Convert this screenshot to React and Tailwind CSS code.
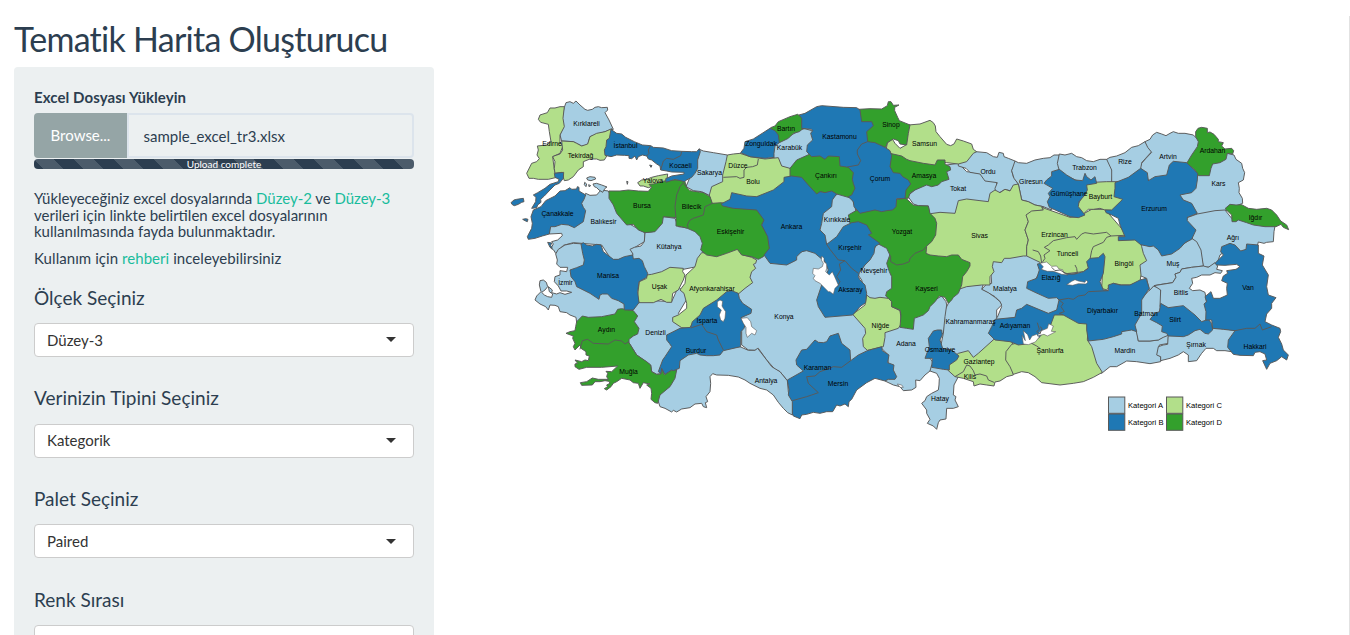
import React from "react";

const A = "#a6cee3";
const B = "#1f78b4";
const C = "#b2df8a";
const D = "#33a02c";
const W = "#ffffff";
const N = "none";

// Map sheets: every sheet has its own origin, three units to the pixel.
const SHEETS = {
  a: [505, 90], b: [505, 230], c: [650, 90], d: [660, 240], e: [800, 90],
  f: [820, 250], g: [960, 130], h: [960, 260], i: [1110, 120], j: [1100, 240],
};

// [sheet, fill, points]; the order is the paint order.
const SHAPES = [
  // category A
  ["a", A, "178,52 183,38 195,35 205,40 213,33 225,45 240,58 248,61 262,58 270,52 280,50 290,53 307,52 308,60 300,68 312,90 325,118 300,125 255,140 248,165 230,168 205,155 170,153 165,135 175,110 170,85"],
  ["a", A, "242,310 255,316 275,315 288,300 310,303 330,340 370,400 420,428 418,455 380,478 388,505 320,510 290,465 230,460 205,458 175,466 152,490 146,480 138,475 145,462 140,455 158,450 172,437 170,430 133,432 133,400 200,400"],
  ["b", A, "418,35 420,8 445,5 475,-40 510,-35 520,-10 590,0 600,60 575,110 500,125 428,140 415,120 405,98 380,85 384,72 375,58 388,52 408,48"],
  ["b", A, "152,72 160,58 180,45 205,40 240,42 250,90 300,130 380,200 370,260 250,280 215,278 213,262 195,255 185,248 165,245 160,230 150,226 135,225 130,240 122,230 105,222 90,210 95,198 108,185 103,165 105,152 115,150 124,157 128,170 120,180 110,187 118,195 128,200 140,202 143,192 133,185 130,170 142,180 140,188 155,192 165,188 180,193 200,187 185,183 168,183 160,168 148,155 150,140 165,135 165,122 185,125 188,112 165,112 155,102 157,90"],
  ["b", A, "370,235 405,210 500,215 520,170 550,200 520,250 560,300 500,325 510,350 475,430 455,433 440,425 437,405 395,375 372,338 365,328 380,300"],
  ["d", A, "245,315 245,275 240,220 215,150 270,120 265,50 310,40 380,60 445,25 490,40 530,110 520,190 580,215 625,265 625,350 572,375 480,345 420,410 382,422 360,395 345,388 320,360 295,325 285,331 265,330"],
  ["d", A, "45,385 50,355 110,330 180,325 240,320 265,331 285,331 293,325 320,360 335,380 360,395 382,422 385,455 400,485 397,525 383,518 370,505 355,487 340,465 320,450 300,445 270,430 255,420 235,411 205,406 170,405 158,401 150,410 152,430 150,455 138,470 143,485 136,488 140,503 130,500 125,490 105,492 90,503 65,507 50,516 40,511 35,516 15,505 0,500 -10,470 20,430"],
  ["c", A, "148,178 160,183 190,188 232,195 240,230 225,285 195,310 178,316 155,305 130,302 108,290 120,262 130,235 135,210"],
  ["c", A, "388,150 415,140 455,118 465,116 495,125 495,205 450,245 395,230 385,210 365,200 365,170"],
  ["e", A, "115,310 150,310 165,350 170,380 175,395 155,410 110,450 80,470 72,440 55,420 65,370 90,350 95,325"],
  ["e", A, "323,318 350,295 420,265 440,225 475,220 500,245 540,250 590,278 590,310 570,345 540,340 480,335 465,380 390,380 385,348 355,347 340,342"],
  ["g", A, "-5,95 20,70 48,65 80,68 100,80 112,82 117,67 130,70 132,80 145,85 165,93 168,97 155,122 160,140 175,162 150,182 135,178 120,187 108,190 105,175 112,158 75,153 60,132 30,127 18,115 -5,108"],
  ["g", A, "165,93 175,98 200,100 225,90 250,85 270,83 282,75 298,75 297,100 310,130 280,180 275,240 250,230 225,225 205,215 185,210 182,195 175,162 162,145 155,122"],
  ["g", A, "298,72 315,75 335,70 350,80 365,83 380,92 400,95 420,88 440,88 455,105 458,130 455,158 410,170 370,160 300,130 292,100"],
  ["i", A, "-10,118 0,112 20,108 45,98 65,82 85,77 105,65 125,95 95,128 95,155 55,185 15,195 5,190 5,150"],
  ["i", A, "105,65 120,58 128,45 140,37 155,42 168,47 180,40 190,35 205,40 225,40 250,45 275,70 245,135 185,140 175,175 120,190 105,160 92,145 95,130 108,115 125,97 113,82"],
  ["i", A, "290,160 308,122 340,115 352,100 372,105 378,118 395,130 398,145 404,158 400,180 385,188 388,205 387,218 397,235 398,250 360,265 345,275 262,285 235,255 200,225 250,200 255,160"],
  ["i", A, "225,295 262,282 315,272 345,270 365,295 430,305 495,318 492,335 490,365 470,367 462,370 445,366 440,385 400,405 365,380 330,405 318,440 280,442 276,418 270,395 258,380 248,358 240,330"],
  ["h", A, "90,-5 145,-10 200,-22 260,5 225,60 215,85 245,90 300,115 295,145 265,175 200,155 180,175 100,190 105,178 112,172 125,140 120,125 105,110 65,88 80,72 95,70"],
  ["f", A, "420,110 490,103 485,118 505,128 525,142 540,155 545,165 530,180 530,205 535,260 540,290 465,335 410,325 365,300 362,290 370,250 370,215 375,180 385,160 395,145"],
  ["f", A, "365,138 378,155 380,165 375,200 370,250 340,260 335,290 330,325 345,345 330,363 315,375 300,392 287,390 288,412 275,420 250,422 240,410 220,405 195,393 215,375 205,340 200,310 180,290 185,250 240,225 275,230 280,195 330,165 345,150"],
  ["f", A, "335,345 388,350 415,380 402,405 400,435 408,440 405,450 415,470 400,475 380,475 378,507 360,510 355,518 350,538 340,528 322,520 330,508 320,490 320,480 305,460 315,452 320,440 335,430 355,420 357,405 358,385 350,370 330,363"],
  ["f", A, "155,10 175,-25 200,-10 222,20 225,120 195,155 140,150 125,90 110,68 125,60 135,42"],
  ["j", A, "-45,295 25,280 65,260 108,255 115,303 150,303 175,300 207,280 205,292 205,310 178,315 173,345 182,350 182,365 150,371 110,365 80,363 50,380 30,380 5,400 -20,390"],
  ["j", A, "120,180 160,138 180,145 190,190 170,235 195,260 207,285 190,292 175,300 150,303 115,303 108,270 100,255 118,220"],
  ["j", A, "115,10 155,10 185,35 240,20 275,-5 290,5 303,30 310,78 275,82 245,87 240,97 225,102 228,112 218,128 190,132 162,137 148,152 140,115 115,105 110,85 130,62 120,45"],
  ["j", A, "162,137 218,128 228,112 225,102 240,97 245,87 275,82 310,78 325,82 345,68 353,78 350,88 367,92 362,100 345,98 330,105 305,105 290,112 275,115 278,130 268,145 278,152 300,150 315,157 320,190 322,245 300,250 250,210 180,200 182,150"],
  ["j", A, "205,280 250,280 300,260 345,264 375,267 410,272 395,310 395,335 375,332 350,332 340,325 318,325 305,340 290,362 265,365 265,345 250,335 235,345 210,355 182,362 182,350 170,345 175,320 190,315 203,313"],
  ["a", A, "245,264 255,260 270,262 272,267 258,272 248,270"],
  ["a", A, "264,282 275,280 290,285 306,291 300,295 293,307 282,300 275,293 268,290"],
  ["a", A, "239,277 245,282 243,290 238,284"],
  ["a", A, "251,284 257,287 252,290"],
  ["a", A, "365,274 369,275 367,283"],
  ["b", B, "128,37 140,39 137,46 142,55 135,52"],
  // category C
  ["a", C, "178,50 165,50 150,54 135,54 127,68 105,75 100,88 107,97 130,103 133,125 138,155 125,165 97,168 100,180 96,195 103,206 95,215 80,220 70,240 65,250 72,265 85,265 100,268 130,268 155,262 148,240 143,200 165,190 173,170 165,155 165,135 178,110 174,85"],
  ["a", C, "320,116 300,125 275,130 255,140 248,162 230,168 215,160 205,155 170,153 173,180 165,192 150,197 143,200 150,215 148,235 150,250 170,247 178,272 190,270 205,260 220,240 235,230 235,215 255,207 275,207 285,211 298,210 310,190 320,150"],
  ["a", C, "398,278 410,270 425,268 440,262 460,257 488,252 486,270 480,282 440,290 430,293 415,288 405,288"],
  ["b", C, "425,135 440,133 470,125 495,112 535,115 533,125 540,135 535,150 520,180 503,190 500,217 485,217 468,208 445,218 402,218 397,200 403,155 425,145"],
  ["d", C, "125,38 150,40 205,30 230,25 250,45 275,52 290,60 287,70 280,73 287,85 275,95 270,112 278,128 255,145 235,162 200,170 140,215 95,255 88,265 65,263 38,245 38,232 55,225 80,205 80,190 72,160 60,150 75,130 78,105 105,80 112,55"],
  ["c", C, "232,195 250,192 270,190 300,200 345,207 385,203 395,228 420,235 430,250 410,268 402,285 370,310 290,328 250,320 240,338 213,348 185,340 178,315 185,290 218,275 218,255 228,215"],
  ["c", N, "325,207 322,225 308,230 290,232 282,240 282,262 270,265 260,260 220,262"],
  ["e", C, "325,105 360,102 390,91 400,98 406,108 408,125 420,140 440,163 452,167 462,162 470,147 490,153 515,162 520,178 530,185 520,190 500,215 475,222 440,218 415,215 405,235 370,232 330,222 275,200 258,182 262,158 277,147 285,160 300,175 318,165"],
  ["g", C, "-95,252 -60,247 -15,250 -5,212 20,207 60,212 85,215 90,190 105,180 120,188 135,178 150,183 160,165 175,162 182,195 185,210 205,215 225,225 250,230 250,240 215,245 200,255 205,275 195,300 205,330 200,350 200,378 190,378 150,385 133,385 125,398 100,395 97,410 102,425 90,440 90,465 65,465 20,470 -10,480 -20,440 -100,400 -110,360 -80,310 -75,270"],
  ["g", C, "245,232 330,262 355,260 395,238 435,238 480,290 500,315 540,330 545,350 550,370 560,392 540,405 543,435 540,455 510,465 485,465 460,460 448,470 440,480 425,475 430,380 410,395 370,425 310,432 250,425 240,397 200,378 200,350 205,330 195,300 205,275 198,255 215,243 250,240"],
  ["g", N, "218,360 235,365 242,378 245,400 255,385 252,375 270,362 253,352 265,345 280,332 320,323 345,320 350,328 365,312 375,308 400,312 440,307 453,318 492,316"],
  ["g", N, "453,318 440,322 430,337 400,350 395,362 390,388"],
  ["g", C, "400,157 440,155 475,155 475,180 490,190 500,210 465,242 435,240 420,235 400,238 385,238 370,252 350,230 370,195 372,165"],
  ["f", C, "383,360 390,330 415,310 445,302 460,322 475,310 525,265 580,270 570,310 580,375 560,380 540,393 525,396 522,408 500,405 480,402 462,408 460,395 430,385 405,380"],
  ["f", N, "405,380 430,365 440,345 450,348 460,362 465,375 480,372 500,378 505,390 522,397"],
  ["f", C, "140,135 150,143 165,145 180,142 205,145 215,155 215,170 240,182 245,220 235,235 195,248 195,262 190,290 142,301 130,290 128,265 137,250 135,235 98,193 135,165"],
  ["h", C, "155,253 210,240 225,225 262,190 280,160 320,165 355,185 385,190 382,240 395,260 410,310 427,337 400,352 370,365 340,370 300,375 245,368 225,350 205,338 185,335 160,343 150,320 137,300 138,275"],
  // category D
  ["b", D, "215,275 232,258 250,262 290,260 330,252 338,238 350,236 385,242 398,258 388,275 402,295 398,312 385,318 372,328 372,338 395,375 425,395 437,405 440,425 455,433 468,432 470,415 478,434 500,420 515,420 510,445 495,470 465,495 458,520 450,518 438,508 440,490 438,475 425,465 435,462 415,458 405,475 400,460 385,458 375,450 350,445 335,455 325,460 318,470 305,480 298,476 308,470 305,465 315,460 312,454 300,452 285,455 270,455 262,465 230,466 226,458 245,455 262,444 280,448 310,448 305,440 308,430 303,424 320,425 338,408 315,410 290,412 245,412 222,418 210,410 210,402 218,400 210,390 230,395 240,390 250,392 253,378 243,375 243,365 228,355 225,345 210,360 205,350 210,340 203,325 205,318 183,310 195,305 210,302 212,290"],
  ["b", N, "225,358 232,332 248,328 265,340 310,342 330,330 350,333 360,342 372,335"],
  ["a", D, "312,303 345,303 370,300 400,303 430,304 440,292 432,283 445,282 490,270 538,270 545,290 547,340 540,385 475,380 472,400 450,425 420,428 400,420 385,403 365,405 335,370 325,345 312,325"],
  ["c", D, "100,278 108,290 120,302 160,308 180,320 187,340 215,338 250,348 320,355 340,375 343,390 335,405 350,430 355,440 360,475 340,500 325,508 305,500 275,495 262,478 230,490 200,500 170,495 152,480 157,460 150,440 135,425 112,415 95,410 78,408 78,385 75,350 80,315 90,290"],
  ["c", N, "187,340 165,350 160,375 130,385 118,392 112,405 115,415"],
  ["c", D, "362,113 375,108 385,95 420,80 443,73 465,90 460,115 448,125 430,130 415,145 388,158 375,130"],
  ["e", D, "175,58 210,56 245,57 262,47 265,35 273,35 280,46 297,45 284,52 284,62 293,82 298,92 330,105 325,130 320,165 300,162 295,152 280,147 262,158 258,170 250,175 195,160 190,120 200,100 180,95"],
  ["e", D, "270,190 305,198 320,208 330,212 370,220 405,225 412,210 435,210 435,222 450,230 452,240 440,245 447,268 425,275 415,285 395,290 380,285 345,300 330,310 325,325 305,325 300,290 265,240"],
  ["e", D, "-30,235 -10,210 35,190 60,190 120,195 125,225 170,235 175,300 155,325 110,312 95,305 75,308 60,305 50,320 25,300 0,270 -30,260"],
  ["f", D, "200,40 215,0 240,-20 320,-10 318,10 330,15 355,18 380,20 395,15 415,15 425,28 450,38 450,48 440,65 428,80 425,105 415,130 400,142 395,150 385,160 375,142 358,138 345,155 330,170 325,182 310,195 283,205 280,238 260,235 240,232 243,195 240,180 215,170 215,155 205,145 197,138 200,125 215,115 215,80 208,65"],
  ["e", D, "290,328 318,325 340,345 355,347 385,348 390,370 405,385 410,400 407,435 395,455 378,470 370,480 345,490 330,505 328,515 310,522 290,525 272,515 272,500 260,475 235,462 205,435 200,410 150,400 145,375 180,355 260,350"],
  ["i", D, "257,50 257,35 264,25 275,22 292,25 292,38 300,36 312,43 325,58 325,65 340,68 335,78 345,87 365,85 371,92 368,102 352,100 348,118 330,128 308,132 303,145 298,167 265,167 255,150 230,130 245,105 262,80 265,65"],
  ["i", D, "345,266 360,253 378,255 395,254 415,265 440,268 470,265 485,270 500,285 512,303 530,315 536,329 520,322 513,313 498,320 465,320 430,315 410,308 385,300 378,305 366,305 365,285"],
  // category B
  ["a", B, "318,118 335,130 350,132 362,142 388,155 412,165 437,167 445,172 475,174 500,182 530,184 560,185 575,185 583,176 586,185 578,210 578,235 570,250 560,262 545,270 538,275 510,268 483,277 482,266 500,258 537,252 537,247 500,246 485,243 467,240 465,228 455,222 440,210 430,207 425,198 412,195 400,200 395,210 390,198 380,206 372,205 372,197 358,196 335,195 318,200 300,196 298,180 303,170 305,150 313,145"],
  ["a", N, "437,167 430,180 432,190 425,198"],
  ["a", N, "530,184 527,197 505,208 485,205 475,213 467,240"],
  ["a", B, "434,225 441,227 438,232"],
  ["a", B, "180,302 195,293 200,298 215,297 217,290 222,292 222,303 242,315 237,328 230,340 235,352 242,362 235,395 208,413 190,405 170,403 150,410 137,410 133,432 112,438 90,445 70,448 67,440 80,415 82,400 78,380 85,360 108,350 122,332 150,318 165,303"],
  ["a", B, "148,250 176,247 175,265 163,280 150,285 135,300 118,318 107,328 108,337 98,345 95,353 80,355 92,335 93,322 85,315 98,308 120,295 135,283 160,275 162,268 150,262"],
  ["a", B, "18,338 27,330 35,328 55,325 57,335 50,337 40,343 28,347 22,344"],
  ["a", B, "53,388 62,386 69,388 67,395 60,392"],
  ["b", B, "228,42 235,38 245,45 262,48 275,43 288,45 295,65 325,88 340,88 358,80 383,75 385,87 402,85 412,92 418,110 428,130 425,142 402,155 398,185 402,218 385,240 358,240 357,222 340,212 320,205 308,192 292,192 285,195 282,208 255,190 215,170 210,155 198,140 195,120 215,113 235,105 238,90 233,70"],
  ["d", B, "200,155 215,152 235,160 238,175 248,190 275,208 273,220 243,233 255,255 252,265 243,275 242,320 190,332 180,345 160,347 140,347 120,345 110,340 85,345 60,362 58,385 40,392 35,390 15,403 5,385 3,400 -5,395 8,360 15,350 35,320 28,310 20,300 20,285 60,265 92,262 97,245 120,225 130,205 170,180"],
  ["d", N, "92,264 125,253 140,275 170,285 175,300 190,330"],
  ["c", B, "272,188 282,175 285,155 310,147 360,115 375,122 385,135 388,158 375,168 372,190 372,202 345,205 300,200"],
  ["e", B, "-3,75 15,70 50,50 65,47 130,52 170,53 180,60 185,95 215,95 220,107 200,125 203,155 225,158 255,172 270,182 275,197 270,230 280,248 300,250 308,260 325,270 332,282 318,300 315,325 290,326 288,350 278,360 260,362 245,365 225,360 180,370 162,350 160,335 145,320 155,315 165,295 160,280 157,268 160,248 145,232 120,228 118,200 85,198 75,208 60,198 35,200 20,185 22,165 38,150 32,130 38,122 35,118 5,115 5,85"],
  ["e", N, "203,155 185,162 172,180 172,192 182,212 175,225 142,231"],
  ["e", B, "-237,342 -210,328 -205,308 -160,318 -130,320 -80,300 -48,275 -48,262 -25,258 5,262 25,285 50,312 60,305 75,308 95,303 110,312 97,330 95,350 70,370 65,400 60,420 75,435 80,463 110,440 130,410 155,398 175,395 200,405 215,430 205,435 240,460 225,470 222,490 210,510 195,525 178,548 175,560 180,570 195,585 200,610 197,638 180,650 158,675 75,682 55,650 50,630 60,600 70,570 85,540 75,515 45,490 20,482 5,485 -10,500 -10,510 -40,525 -90,520 -108,495 -92,475 -97,440 -115,405 -108,390 -130,360 -200,355 -232,348"],
  ["e", N, "80,463 90,478 115,510 135,512 155,535 175,550"],
  ["e", N, "135,512 118,522 122,540 110,560 120,575 112,590"],
  ["d", B, "382,420 430,393 410,375 408,360 425,330 440,328 465,300 475,307 490,308 500,305 510,288 535,280 545,310 570,330 572,362 595,345 622,332 665,320 667,332 687,345 683,368 702,375 700,390 710,410 705,418 685,418 675,423 645,415 620,428 590,450 575,478 567,485 565,500 555,492 540,498 530,495 518,515 500,515 480,520 460,517 440,523 425,525 420,536 400,528 397,520 397,485 385,465 387,450"],
  ["d", N, "572,362 545,382 520,380 500,388 480,395 465,408 440,410 445,430 475,458 455,465 440,470 397,482"],
  ["f", B, "340,243 352,240 365,240 367,255 360,270 368,295 395,300 417,318 410,330 388,345 388,360 370,358 335,352 337,325 315,325 328,290 325,265"],
  ["i", B, "15,188 55,172 92,145 112,158 115,182 135,170 170,165 178,135 190,124 230,128 263,160 262,180 258,205 245,218 210,225 220,240 245,250 262,280 232,292 232,302 258,330 245,358 225,368 210,385 185,402 155,408 145,390 130,378 120,380 92,374 75,360 25,362 25,350 45,350 30,315 25,295 5,285 -12,278 -15,270 5,270 38,238 12,230 15,205"],
  ["g", B, "275,125 298,118 320,135 345,150 368,152 375,130 380,140 393,150 405,140 410,160 380,165 382,180 375,195 357,215 355,230 375,255 355,263 330,260 268,232 262,215 270,200 265,190 278,175 252,160 260,150 275,138"],
  ["h", B, "232,12 245,10 252,20 246,28 290,35 315,42 345,42 370,35 385,25 380,5 390,-5 415,-7 430,-20 435,-10 430,40 420,65 430,90 445,92 445,75 460,70 480,75 510,75 540,60 558,55 568,85 545,120 545,160 525,195 530,215 515,210 485,215 485,222 460,230 430,238 385,243 380,210 380,192 355,190 310,165 283,165 270,200 250,215 240,230 215,250 175,255 150,245 105,240 85,220 95,200 105,178 165,172 170,150 185,145 200,133 265,160 290,150 297,120 290,113 265,115 225,97 200,85 203,65 230,55 238,30"],
  ["h", N, "297,120 325,115 340,118 355,108 375,105 385,95 445,92"],
  ["h", N, "297,120 310,130 303,140 313,155 298,160 310,165"],
  ["h", W, "240,10 260,6 275,19 290,18 297,27 308,29 310,38 324,45 305,43 280,34 262,34 244,28 250,20"],
  ["h", W, "320,74 335,64 345,59 355,63 375,67 378,60 384,66 378,72 355,71 338,76"],
  ["h", N, "275,22 285,32 300,30 318,40 335,42 352,40 350,25 345,15"],
  ["h", W, "186,226 196,242 190,212 203,224 209,240 216,228 230,223 238,231 226,246 205,254 190,252"],
  ["h", W, "240,214 262,205 266,191 280,198 274,214 287,215 270,224 262,228 252,223 232,228"],
  ["h", N, "232,188 238,208 230,215 240,222 246,205 240,200"],
  ["h", N, "215,250 230,258 240,265"],
  ["j", B, "182,190 205,203 250,197 285,225 305,245 325,238 335,250 338,270 325,282 315,280 300,268 285,272 265,285 250,290 205,288 200,280 185,275 187,258 170,248 150,238 165,220 178,215"],
  ["j", B, "345,70 370,45 362,35 365,20 390,10 405,15 422,33 438,28 440,12 475,15 475,40 492,48 487,75 505,105 500,140 505,165 528,173 515,190 515,205 500,222 495,245 515,255 540,265 542,275 535,292 545,312 550,330 565,345 560,360 545,350 530,362 510,370 500,388 488,362 500,360 495,342 480,335 465,337 460,347 420,346 400,343 383,322 385,300 405,272 370,268 338,265 335,240 317,240 318,215 312,192 320,185 315,170 333,155 340,175 360,175 382,165 380,145 382,130 365,122 370,108 383,100 380,92 408,88 420,80 410,73 375,76 350,75"],
  ["j", N, "405,272 440,265 465,265 480,252 487,270 515,260"],
  // lakes
  ["d", W, "172,185 180,180 188,184 186,198 190,205 197,215 195,235 190,245 182,240 178,225 184,210 172,200"],
  ["d", W, "243,235 262,233 272,245 275,260 290,272 285,285 275,280 262,292 258,280 258,262 250,250"],
  ["d", W, "485,48 492,55 492,65 500,72 500,85 497,95 508,105 517,95 524,110 535,135 525,145 520,163 510,155 505,155 480,130 465,122 460,115 465,107 458,100 460,85 475,87 487,80 490,70 484,60"],
  ["f", W, "232,402 245,405 250,412 240,412"],
];

const LABELS = [
  ["Kırklareli", 586.5, 126], ["Edirne", 552, 146], ["Tekirdağ", 580.5, 158], ["İstanbul", 625.5, 148],
  ["Kocaeli", 680.5, 168], ["Yalova", 653, 183], ["Sakarya", 709.5, 175], ["Düzce", 738, 168],
  ["Bolu", 753, 184], ["Zonguldak", 761, 146], ["Karabük", 789.5, 150], ["Bartın", 786, 131],
  ["Kastamonu", 839.5, 139], ["Sinop", 891, 127], ["Samsun", 924.5, 146], ["Çankırı", 826, 178],
  ["Çorum", 880, 181], ["Amasya", 924, 178], ["Tokat", 958, 191], ["Ordu", 988, 174],
  ["Giresun", 1031, 184], ["Trabzon", 1084.5, 170], ["Rize", 1125, 164], ["Artvin", 1168, 159],
  ["Ardahan", 1212.5, 153], ["Kars", 1218.5, 186], ["Iğdır", 1255.5, 220], ["Ağrı", 1233, 240],
  ["Erzurum", 1154, 211], ["Gümüşhane", 1069, 196], ["Bayburt", 1100.5, 199], ["Erzincan", 1054.5, 237],
  ["Tunceli", 1067.5, 256], ["Bingöl", 1124, 266], ["Muş", 1173, 266], ["Bitlis", 1181, 295],
  ["Van", 1248, 290], ["Hakkari", 1255, 349], ["Şırnak", 1196, 347], ["Siirt", 1175, 322],
  ["Batman", 1146, 316], ["Mardin", 1125, 353], ["Diyarbakır", 1102.5, 313], ["Elazığ", 1051, 280],
  ["Malatya", 1005, 291], ["Adıyaman", 1015, 328], ["Şanlıurfa", 1050, 353], ["Gaziantep", 979, 364],
  ["Kilis", 970, 379], ["Hatay", 940, 401], ["Osmaniye", 940, 352], ["Kahramanmaraş", 970.5, 324],
  ["Adana", 906, 346], ["Niğde", 880.5, 328], ["Kayseri", 926.5, 291], ["Sivas", 979.5, 238],
  ["Yozgat", 902, 234], ["Kırşehir", 850, 250], ["Nevşehir", 874, 273], ["Aksaray", 850.5, 292],
  ["Kırıkkale", 837, 222], ["Ankara", 791.5, 229], ["Eskişehir", 730.5, 234], ["Bilecik", 691.5, 209],
  ["Bursa", 642, 208], ["Çanakkale", 557.5, 216], ["Balıkesir", 603.5, 224], ["Kütahya", 669, 249],
  ["Manisa", 608, 278], ["İzmir", 565.5, 285], ["Uşak", 659.5, 289], ["Aydın", 606.5, 332],
  ["Denizli", 655.5, 335], ["Muğla", 628.5, 374], ["Afyonkarahisar", 712, 291], ["Isparta", 707, 323],
  ["Burdur", 696, 353], ["Antalya", 766, 383], ["Konya", 784, 319], ["Karaman", 817.5, 370],
  ["Mersin", 838, 386],
];

const LEGEND = [
  ["Kategori A", A, 1108.5, 397], ["Kategori B", B, 1108.5, 414],
  ["Kategori C", C, 1166.5, 397], ["Kategori D", D, 1166.5, 414],
];

function ProvinceMap() {
  return (
    <svg width="916" height="635" viewBox="434 0 916 635" className="block shrink-0">
      {SHAPES.map(([sheet, fill, points], k) => {
        const [x, y] = SHEETS[sheet];
        const Tag = fill === N ? "polyline" : "polygon";
        return (
          <Tag
            key={k}
            points={points}
            fill={fill}
            stroke="#595959"
            strokeWidth={fill === W ? "1.8" : "2.9"}
            strokeLinejoin="round"
            transform={`translate(${x} ${y}) scale(0.33333)`}
          />
        );
      })}
      <g fontFamily="'Liberation Sans', Arial, sans-serif" fontSize="6.8" fill="#000" textAnchor="middle">
        {LABELS.map(([name, x, y]) => (
          <text key={name} x={x} y={y}>{name}</text>
        ))}
      </g>
      <g fontFamily="'Liberation Sans', Arial, sans-serif" fontSize="7.6" fill="#000">
        {LEGEND.map(([name, fill, x, y]) => (
          <g key={name}>
            <rect x={x} y={y} width="16.3" height="16.3" fill={fill} stroke="#595959" />
            <text x={x + 19.5} y={y + 11}>{name}</text>
          </g>
        ))}
      </g>
      <path d="M1349.5 16V635" stroke="#e2e2e2" />
    </svg>
  );
}

function SelectField({ label, value }) {
  return (
    <div className="h-[100.8px]">
      <h4 className="text-[19px] leading-[21px]">{label}</h4>
      <div className="mt-[15.4px] flex h-[34px] items-center justify-between rounded-[4px] border border-[#cccccc] bg-white pr-[17px] pl-3 text-[15px] text-[#333333]">
        <span>{value}</span>
        <svg width="10" height="5" viewBox="0 0 10 5">
          <path d="M0 0h10L5 5z" fill="#333333" />
        </svg>
      </div>
    </div>
  );
}

export default function App() {
  return (
    <div className="flex h-[635px] w-[1350px] overflow-hidden bg-white font-[Lato,sans-serif] text-[15px] text-[#2c3e50]">
      <div className="w-[434px] shrink-0 pl-[14px]">
        <h2 className="h-[67px] pt-[20px] text-[34px] leading-[37px] tracking-[-0.73px] whitespace-nowrap">Tematik Harita Oluşturucu</h2>
        <aside className="h-[620px] rounded-[4px] bg-[#ecf0f1] px-5 pt-[20px]">
          <div className="text-[15px] leading-[21px] font-bold tracking-[0.08px]">Excel Dosyası Yükleyin</div>
          <div className="mt-[5px] flex h-[45px]">
            <div className="flex w-[93px] items-center justify-center rounded-l-[4px] bg-[#95a5a6] text-white">Browse...</div>
            <div className="flex flex-1 items-center rounded-r-[4px] border-2 border-[#dce4ec] pt-px pl-[14.5px]">sample_excel_tr3.xlsx</div>
          </div>
          <div className="mt-[1px] h-[10px] overflow-hidden rounded-[4px] bg-[#2c3e50] bg-[linear-gradient(45deg,rgba(255,255,255,.15)_25%,transparent_25%,transparent_50%,rgba(255,255,255,.15)_50%,rgba(255,255,255,.15)_75%,transparent_75%,transparent)] bg-[length:40px_40px] text-center text-[10px] leading-[11px] text-white">
            Upload complete
          </div>
          <p className="mt-[21px] text-[15px] leading-[16.5px] whitespace-nowrap">
            <span className="tracking-[-0.04px]">
              Yükleyeceğiniz excel dosyalarında <a className="text-[#18bc9c]">Düzey-2</a> ve <a className="text-[#18bc9c]">Düzey-3</a>
            </span>
            <br />
            verileri için linkte belirtilen excel dosyalarının
            <br />
            kullanılmasında fayda bulunmaktadır.
          </p>
          <p className="mt-[10px] leading-[17px] tracking-[0.06px]">
            Kullanım için <a className="text-[#18bc9c]">rehberi</a> inceleyebilirsiniz
          </p>
          <div className="mt-[20px]">
            <SelectField label="Ölçek Seçiniz" value="Düzey-3" />
            <SelectField label="Verinizin Tipini Seçiniz" value="Kategorik" />
            <SelectField label="Palet Seçiniz" value="Paired" />
            <SelectField label="Renk Sırası" value="" />
          </div>
        </aside>
      </div>
      <ProvinceMap />
    </div>
  );
}
